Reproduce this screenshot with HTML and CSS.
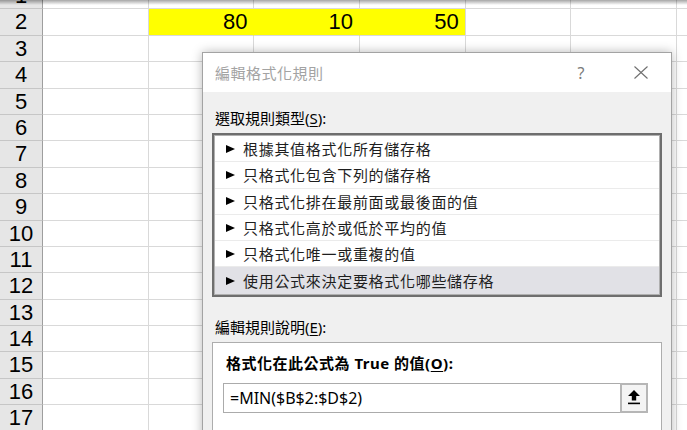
FILE: index.html
```html
<!DOCTYPE html>
<html>
<head>
  <meta charset="UTF-8">
  <meta name="viewport" content="width=device-width, initial-scale=1.0">
  <title>編輯格式化規則</title>
  <link rel="stylesheet" href="styles.css">
</head>
<body>
  <div class="sheet" id="sheet">
    <!-- Linhas da planilha geradas abaixo -->
  </div>

  <div class="dialog">
    <div class="titlebar">
      <span class="title">編輯格式化規則</span>
      <span class="help">?</span>
      <svg class="close" width="14" height="13" viewBox="0 0 14 13">
        <path d="M0.5 0.5 L13.5 12.5 M13.5 0.5 L0.5 12.5" stroke="#6f6f6f" stroke-width="1.1" fill="none"/>
      </svg>
    </div>

    <div class="dialog-body">
      <div class="label">選取規則類型(<u>S</u>):</div>
      <div class="rule-list">
        <div class="rule"><span class="tri"></span>根據其值格式化所有儲存格</div>
        <div class="rule"><span class="tri"></span>只格式化包含下列的儲存格</div>
        <div class="rule"><span class="tri"></span>只格式化排在最前面或最後面的值</div>
        <div class="rule"><span class="tri"></span>只格式化高於或低於平均的值</div>
        <div class="rule"><span class="tri"></span>只格式化唯一或重複的值</div>
        <div class="rule selected"><span class="tri"></span>使用公式來決定要格式化哪些儲存格</div>
      </div>

      <div class="label section">編輯規則說明(<u>E</u>):</div>
      <div class="panel">
        <div class="label strong">格式化在此公式為 True 的值(<u>O</u>):</div>
        <div class="formula">
          <span class="formula-text">=MIN($B$2:$D$2)</span>
          <span class="pick">
            <svg width="12" height="15" viewBox="0 0 12 15">
              <path d="M6 0 L12 6 H8.2 V10.5 H3.8 V6 H0 Z" fill="#000"/>
              <rect x="0" y="12.6" width="12" height="1.6" fill="#000"/>
            </svg>
          </span>
        </div>
      </div>
    </div>
  </div>

  <script>
    // Monta as linhas 1 a 17 com 7 colunas (A-G)
    const sheet = document.getElementById('sheet');
    const valores = { 2: ['', '80', '10', '50'] };

    for (let linha = 1; linha <= 17; linha++) {
      const cab = document.createElement('div');
      cab.className = 'cell rowhead';
      cab.textContent = linha;
      sheet.appendChild(cab);

      for (let col = 0; col < 7; col++) {
        const cel = document.createElement('div');
        cel.className = 'cell';
        if (linha === 2 && col >= 1 && col <= 3) {
          cel.classList.add('fill');
          if (col === 3) cel.classList.add('fill-end');
          cel.textContent = valores[2][col];
        }
        sheet.appendChild(cel);
      }
    }
  </script>
</body>
</html>
```

FILE: styles.css
```css
body {
  margin: 0;
  width: 687px;
  height: 430px;
  overflow: hidden;
  position: relative;
  background: #fff;
  font-family: 'Liberation Sans', Arial, sans-serif;
}
body::before {
  content: '';
  position: absolute;
  left: 0;
  right: 0;
  top: 0;
  height: 5px;
  background: linear-gradient(rgba(0, 0, 0, 0.35), rgba(0, 0, 0, 0));
  z-index: 2;
}
.sheet {
  display: grid;
  grid-template-columns: 43px repeat(7, 105.7px);
  grid-auto-rows: 26.4px;
  margin-top: -17px;
}
.cell {
  box-sizing: border-box;
  border-right: 1px solid #d9d9d9;
  border-bottom: 1px solid #d9d9d9;
  font-size: 22px;
  line-height: 26px;
  text-align: right;
  padding-right: 6px;
  color: #000;
}
.rowhead {
  background: #e6e6e6;
  border-right: 1px solid #9e9e9e;
  border-bottom-color: #c6c6c6;
  text-align: center;
  padding: 0;
}
.fill {
  background: #ffff00;
  border-right-color: #ffff00;
}
.fill-end {
  border-right-color: #d9d9d9;
}
.dialog {
  position: absolute;
  left: 202px;
  top: 52px;
  width: 470px;
  height: 400px;
  box-sizing: border-box;
  border: 1px solid #a3a3a3;
  background: #f0f0f0;
  box-shadow: 0 0 10px rgba(0, 0, 0, 0.28);
  font-family: 'Noto Sans', 'Noto Sans CJK TC', sans-serif;
  font-size: 15px;
  color: #000;
  z-index: 3;
}
.titlebar {
  height: 39px;
  background: #fff;
  display: flex;
  align-items: center;
  padding-left: 12px;
}
.title {
  flex: 1;
  color: #a3a3a3;
  letter-spacing: 0.5px;
}
.help {
  width: 20px;
  text-align: center;
  color: #7a7a7a;
  font-size: 16px;
  margin-right: 43px;
}
.close {
  margin-right: 23px;
}
.dialog-body {
  padding: 0 9px;
}
.label {
  line-height: 20px;
  padding-left: 3px;
  margin-top: 16px;
}
.label u {
  text-underline-offset: 2px;
}
.section {
  margin-top: 20px;
}
.rule-list {
  margin-top: 5px;
  background: #fff;
  border: 2px solid #6e6e6e;
  box-shadow: inset 0 0 0 1px #b0b0b0;
  padding: 1px;
}
.rule {
  height: 26.3px;
  box-sizing: border-box;
  border-bottom: 1px solid #ebebeb;
  display: flex;
  align-items: center;
  gap: 8px;
  padding-left: 11px;
  letter-spacing: 0.7px;
  color: #1e1e1e;
}
.rule.selected {
  background: #e1e1e6;
  border-bottom: none;
}
.tri {
  width: 0;
  height: 0;
  border-left: 9px solid #000;
  border-top: 4px solid transparent;
  border-bottom: 4px solid transparent;
}
.panel {
  margin-top: 5px;
  height: 120px;
  background: #fff;
  border: 1px solid #adadad;
  padding: 10px 13px 0 10px;
}
.strong {
  margin-top: 0;
  font-weight: bold;
  letter-spacing: 0.5px;
}
.formula {
  margin-top: 10px;
  height: 30px;
  box-sizing: border-box;
  border: 1px solid #ababab;
  display: flex;
  align-items: center;
}
.formula-text {
  flex: 1;
  padding-left: 6px;
  font-size: 16px;
}
.pick {
  width: 28px;
  height: 30px;
  margin: -1px -1px -1px 0;
  box-sizing: border-box;
  border: 2px solid #b6b6b6;
  background: #f4f4f4;
  display: flex;
  align-items: center;
  justify-content: center;
}
```
